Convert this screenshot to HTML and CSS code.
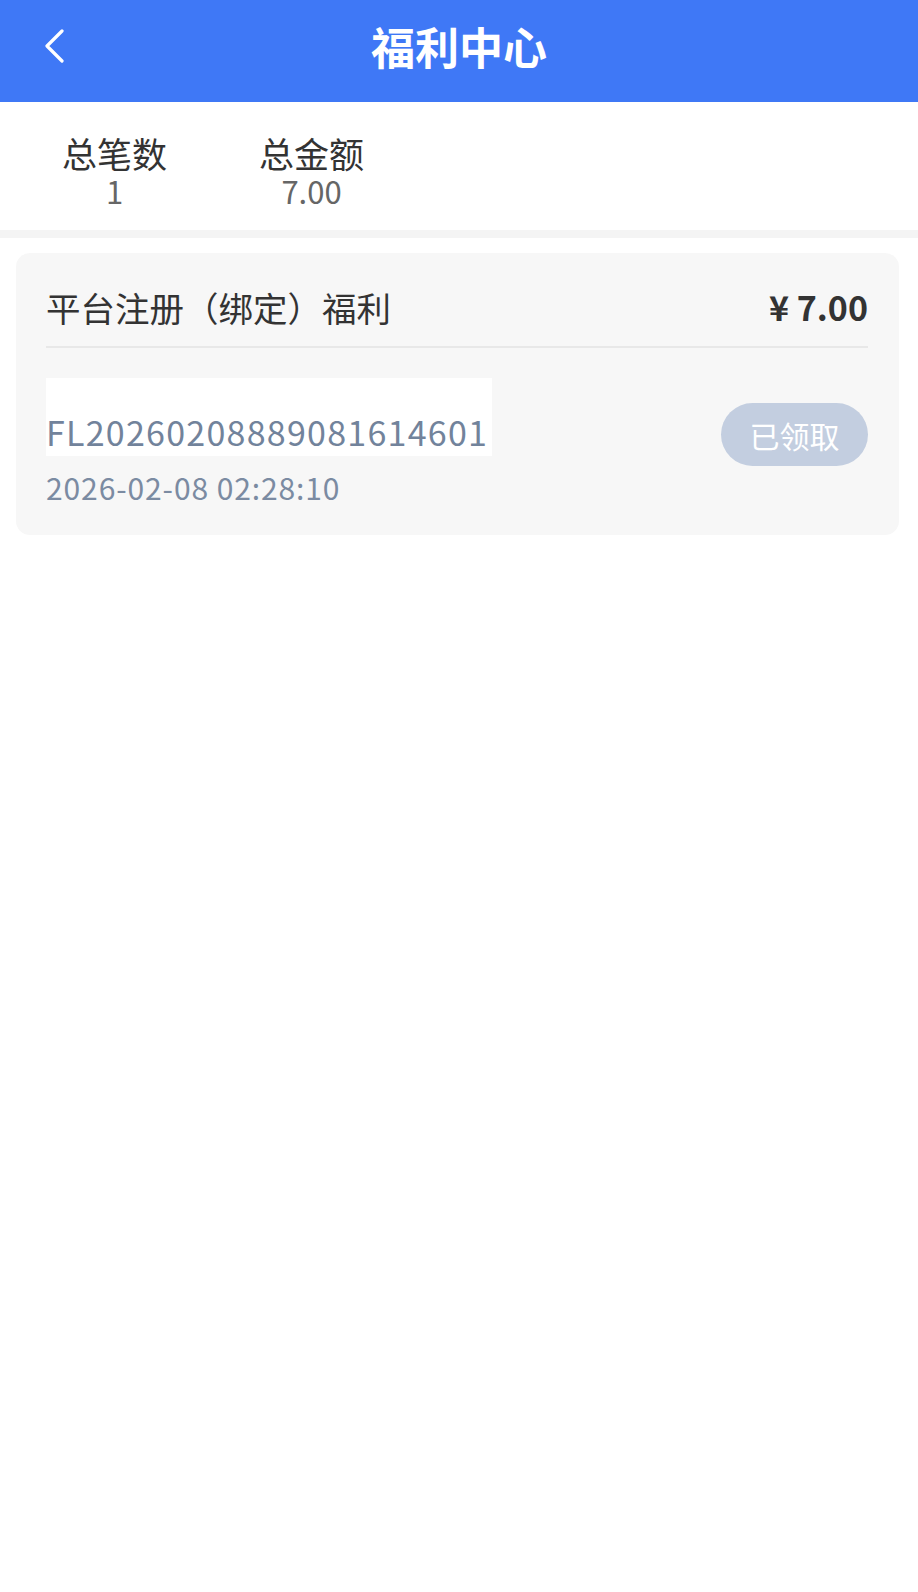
FILE: index.html
```html
<!DOCTYPE html>
<html lang="zh-CN">
<head>
<meta charset="utf-8">
<title>福利中心</title>
<link rel="stylesheet" href="styles.css">
</head>
<body>
<header class="topbar">
  <div class="back">
    <svg width="22" height="34" viewBox="0 0 22 34"><path d="M18 2 L3 17 L18 32" fill="none" stroke="#fff" stroke-width="3.2" stroke-linecap="round" stroke-linejoin="round"/></svg>
  </div>
  <h1 class="title">福利中心</h1>
  <div></div>
</header>
<section class="stats">
  <div class="stat">
    <div class="stat-label">总笔数</div>
    <div class="stat-value">1</div>
  </div>
  <div class="stat">
    <div class="stat-label">总金额</div>
    <div class="stat-value">7.00</div>
  </div>
</section>
<div class="band"></div>
<main class="list">
  <div class="card">
    <div class="card-head">
      <span class="card-title">平台注册（绑定）福利</span>
      <span class="card-amount">¥ 7.00</span>
    </div>
    <div class="card-body">
      <div class="info">
        <div class="order"><span>FL20260208889081614601</span></div>
        <div class="date">2026-02-08 02:28:10</div>
      </div>
      <div class="btn">已领取</div>
    </div>
  </div>
</main>
</body>
</html>
```
FILE: styles.css
```css
* { box-sizing: border-box; }
html, body { margin: 0; padding: 0; background: #fff; }
body {
  font-family: "Noto Sans CJK SC", "Noto Sans", sans-serif;
  width: 918px;
  min-height: 1592px;
}
.topbar {
  height: 102px;
  background: #3f78f6;
  display: grid;
  grid-template-columns: 1fr auto 1fr;
  align-items: center;
}
.back {
  padding-left: 44px;
  padding-bottom: 10px;
  display: flex;
  align-items: center;
  height: 100%;
}
.title {
  margin: 0;
  color: #fff;
  font-size: 44px;
  font-weight: 700;
  line-height: 1;
  padding-bottom: 10px;
}
.stats {
  display: flex;
  height: 128px;
  padding: 30px 0 0 16px;
}
.stat {
  width: 197px;
  display: flex;
  flex-direction: column;
  align-items: center;
}
.stat-label {
  font-size: 35px;
  line-height: 42px;
  color: #333;
}
.stat-value {
  font-size: 31px;
  line-height: 34px;
  color: #666;
}
.band {
  height: 8px;
  background: #f4f4f4;
}
.list {
  padding: 15px 19px 0 16px;
}
.card {
  background: #f7f7f7;
  border-radius: 14px;
  padding: 0 31px 28px 30px;
}
.card-head {
  display: flex;
  justify-content: space-between;
  align-items: center;
  padding: 30px 0 15px;
  border-bottom: 2px solid #e8e8e8;
}
.card-title {
  font-size: 34.5px;
  line-height: 48px;
  color: #333;
}
.card-amount {
  font-size: 34px;
  line-height: 48px;
  font-weight: 700;
  color: #333;
}
.card-body {
  display: flex;
  justify-content: space-between;
  align-items: flex-start;
  padding-top: 30px;
}
.order span {
  display: inline-block;
  background: #fff;
  padding: 31px 4px 1px 0;
  font-size: 34px;
  line-height: 46px;
  color: #72839b;
  letter-spacing: 1.25px;
}
.date {
  margin-top: 11px;
  font-size: 30px;
  line-height: 40px;
  color: #7b8ba2;
  letter-spacing: 0.9px;
}
.btn {
  margin-top: 25px;
  width: 147px;
  height: 63px;
  border-radius: 32px;
  background: #c3cee0;
  color: #fff;
  font-size: 30px;
  display: flex;
  align-items: center;
  justify-content: center;
}
```
